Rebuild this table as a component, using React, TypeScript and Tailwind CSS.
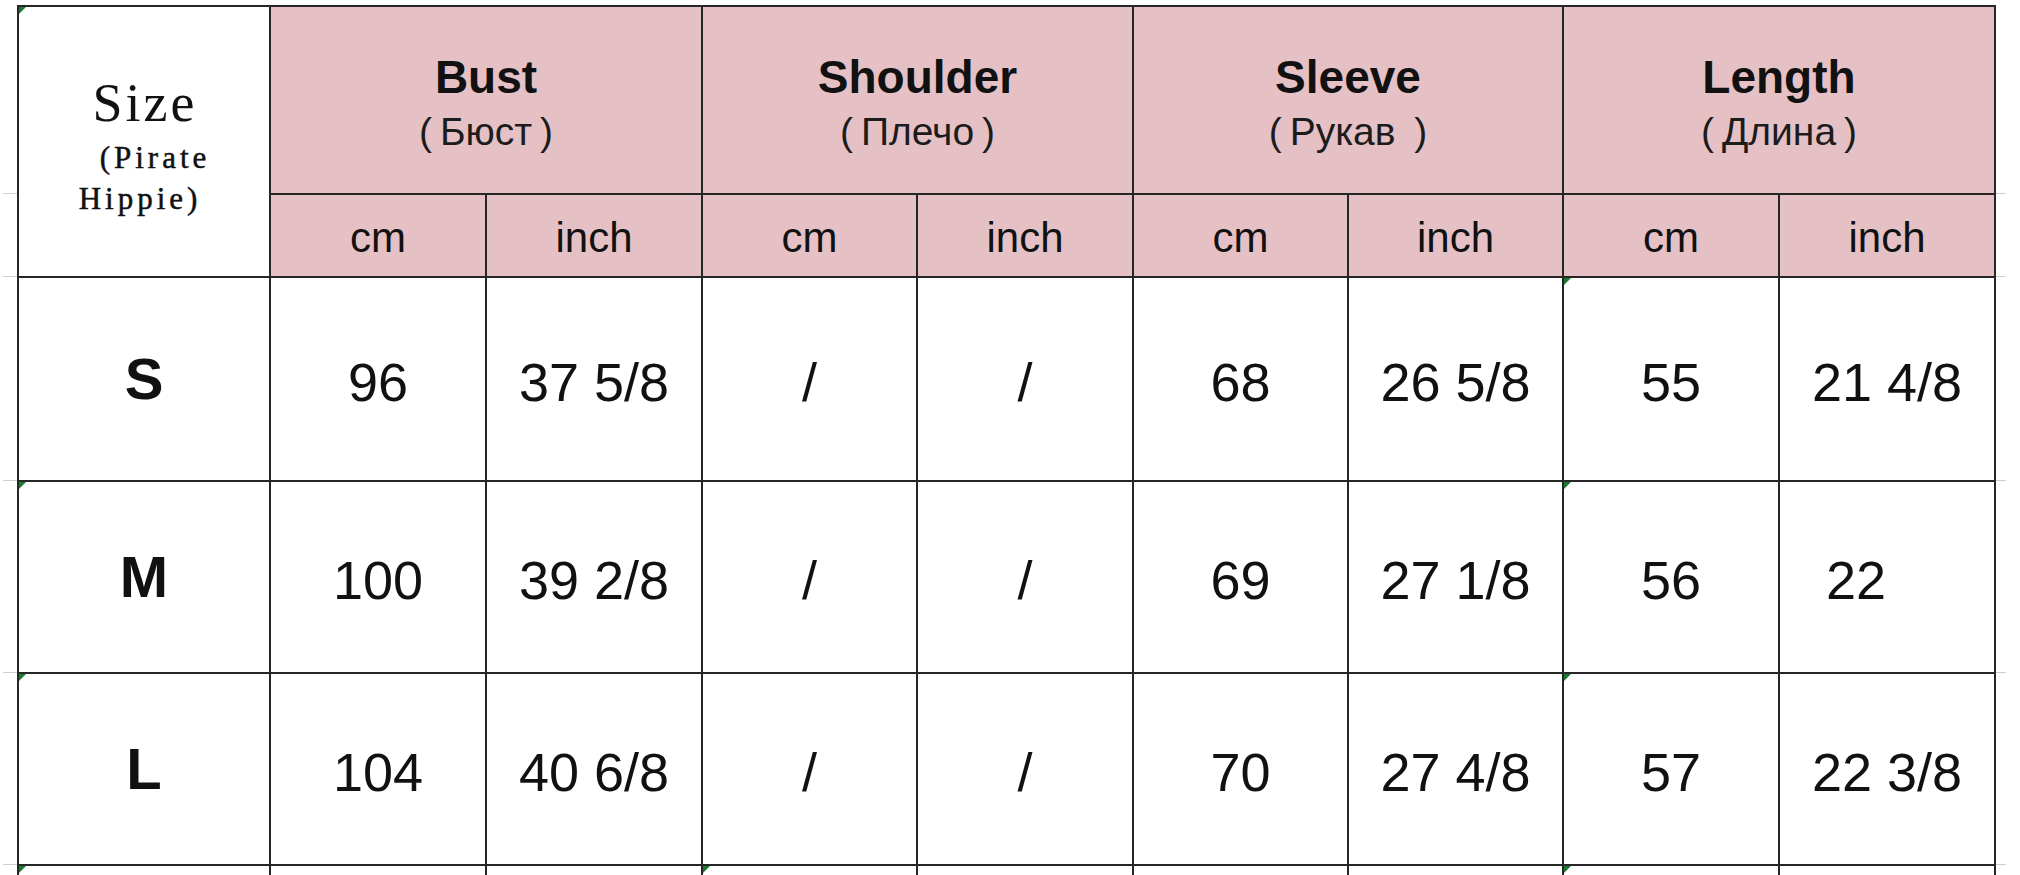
import React from "react"

const groups = [
  { title: "Bust", sub: "Бюст" },
  { title: "Shoulder", sub: "Плечо" },
  { title: "Sleeve", sub: "Рукав " },
  { title: "Length", sub: "Длина" },
]

// 8 value columns: cm / inch for each group
const rows = [
  { size: "S", vals: ["96", "37 5/8", "/", "/", "68", "26 5/8", "55", "21 4/8"] },
  { size: "M", vals: ["100", "39 2/8", "/", "/", "69", "27 1/8", "56", "22"] },
  { size: "L", vals: ["104", "40 6/8", "/", "/", "70", "27 4/8", "57", "22 3/8"] },
]

// cells that carry the little green excel marker (row index, column index; col 0 = size)
const marks: Record<string, boolean> = {
  "1-0": true,
  "2-0": true,
  "3-0": true,
  "0-7": true,
  "1-7": true,
  "2-7": true,
  "3-7": true,
  "3-3": true,
}

function Mark() {
  return (
    <span className="absolute left-0 top-0 h-0 w-0 border-t-[7px] border-r-[7px] border-t-[#1d7a35] border-r-transparent" />
  )
}

function Gutter({ side }: { side: "left" | "right" }) {
  const heights = ["h-[194px]", "h-[83px]", "h-[204px]", "h-[192px]", "h-[192px]"]
  return (
    <div className={side === "left" ? "flex w-[17px] flex-col pl-[3px]" : "flex w-[24px] flex-col pr-[14px]"}>
      {heights.map((h, i) => (
        <div key={i} className={`${h} border-b border-[#cfcfcf]`} />
      ))}
    </div>
  )
}

export default function App() {
  return (
    <div className="h-[875px] w-[2020px] overflow-hidden bg-white font-['Liberation_Sans',Arial,sans-serif] text-[#111]">
      <div className="flex">
        <Gutter side="left" />
        <div className="mt-[5px] grid grid-cols-[250px_214px_214px_213px_214px_213px_213px_214px_214px] grid-rows-[186px_81px_202px_190px_190px_190px] gap-[2px] bg-[#262626] p-[2px]">
          {/* size header */}
          <div className="relative row-span-2 flex flex-col items-center bg-white pt-[71px] font-['Liberation_Serif','DejaVu_Serif',serif] text-[#111]">
            <Mark />
            <div className="pl-[2px] text-[54px] leading-[50px] tracking-[3px]">Size</div>
            <div className="mt-[9px] pl-[22px] text-[31px] leading-[41px] tracking-[4px] [-webkit-text-stroke:0.5px_#111]">(Pirate</div>
            <div className="pr-[8px] text-[31px] leading-[41px] tracking-[4px] [-webkit-text-stroke:0.5px_#111]">Hippie)</div>
          </div>

          {groups.map((g) => (
            <div key={g.title} className="col-span-2 flex flex-col items-center justify-center bg-[#e5c1c6] pt-[14px]">
              <div className="text-[46px] font-bold leading-[50px]">{g.title}</div>
              <div className="text-[39px] leading-[60px] text-[#1c1c1c]">
                <span className="mr-[8px]">(</span>
                <span className="whitespace-pre">{g.sub}</span>
                <span className="ml-[8px]">)</span>
              </div>
            </div>
          ))}

          {groups.map((g) => (
            <React.Fragment key={g.title + "-units"}>
              <div className="flex items-center justify-center bg-[#e5c1c6] pt-[4px] text-[42px] leading-none">cm</div>
              <div className="flex items-center justify-center bg-[#e5c1c6] pt-[4px] text-[42px] leading-none">inch</div>
            </React.Fragment>
          ))}

          {rows.map((r, ri) => (
            <React.Fragment key={r.size}>
              <div className="relative flex items-center justify-center bg-white text-[58px] font-bold leading-none">
                {marks[`${ri}-0`] && <Mark />}
                {r.size}
              </div>
              {r.vals.map((v, ci) => (
                <div
                  key={ci}
                  className={`relative flex items-center justify-center bg-white pt-[6px] text-[54px] leading-none ${
                    v === "22" ? "pr-[62px]" : ""
                  }`}
                >
                  {marks[`${ri}-${ci + 1}`] && <Mark />}
                  {v}
                </div>
              ))}
            </React.Fragment>
          ))}

          {/* next row, cut off by the window */}
          {Array.from({ length: 9 }).map((_, ci) => (
            <div key={"tail-" + ci} className="relative bg-white">
              {marks[`3-${ci}`] && <Mark />}
            </div>
          ))}
        </div>
        <Gutter side="right" />
      </div>
    </div>
  )
}
